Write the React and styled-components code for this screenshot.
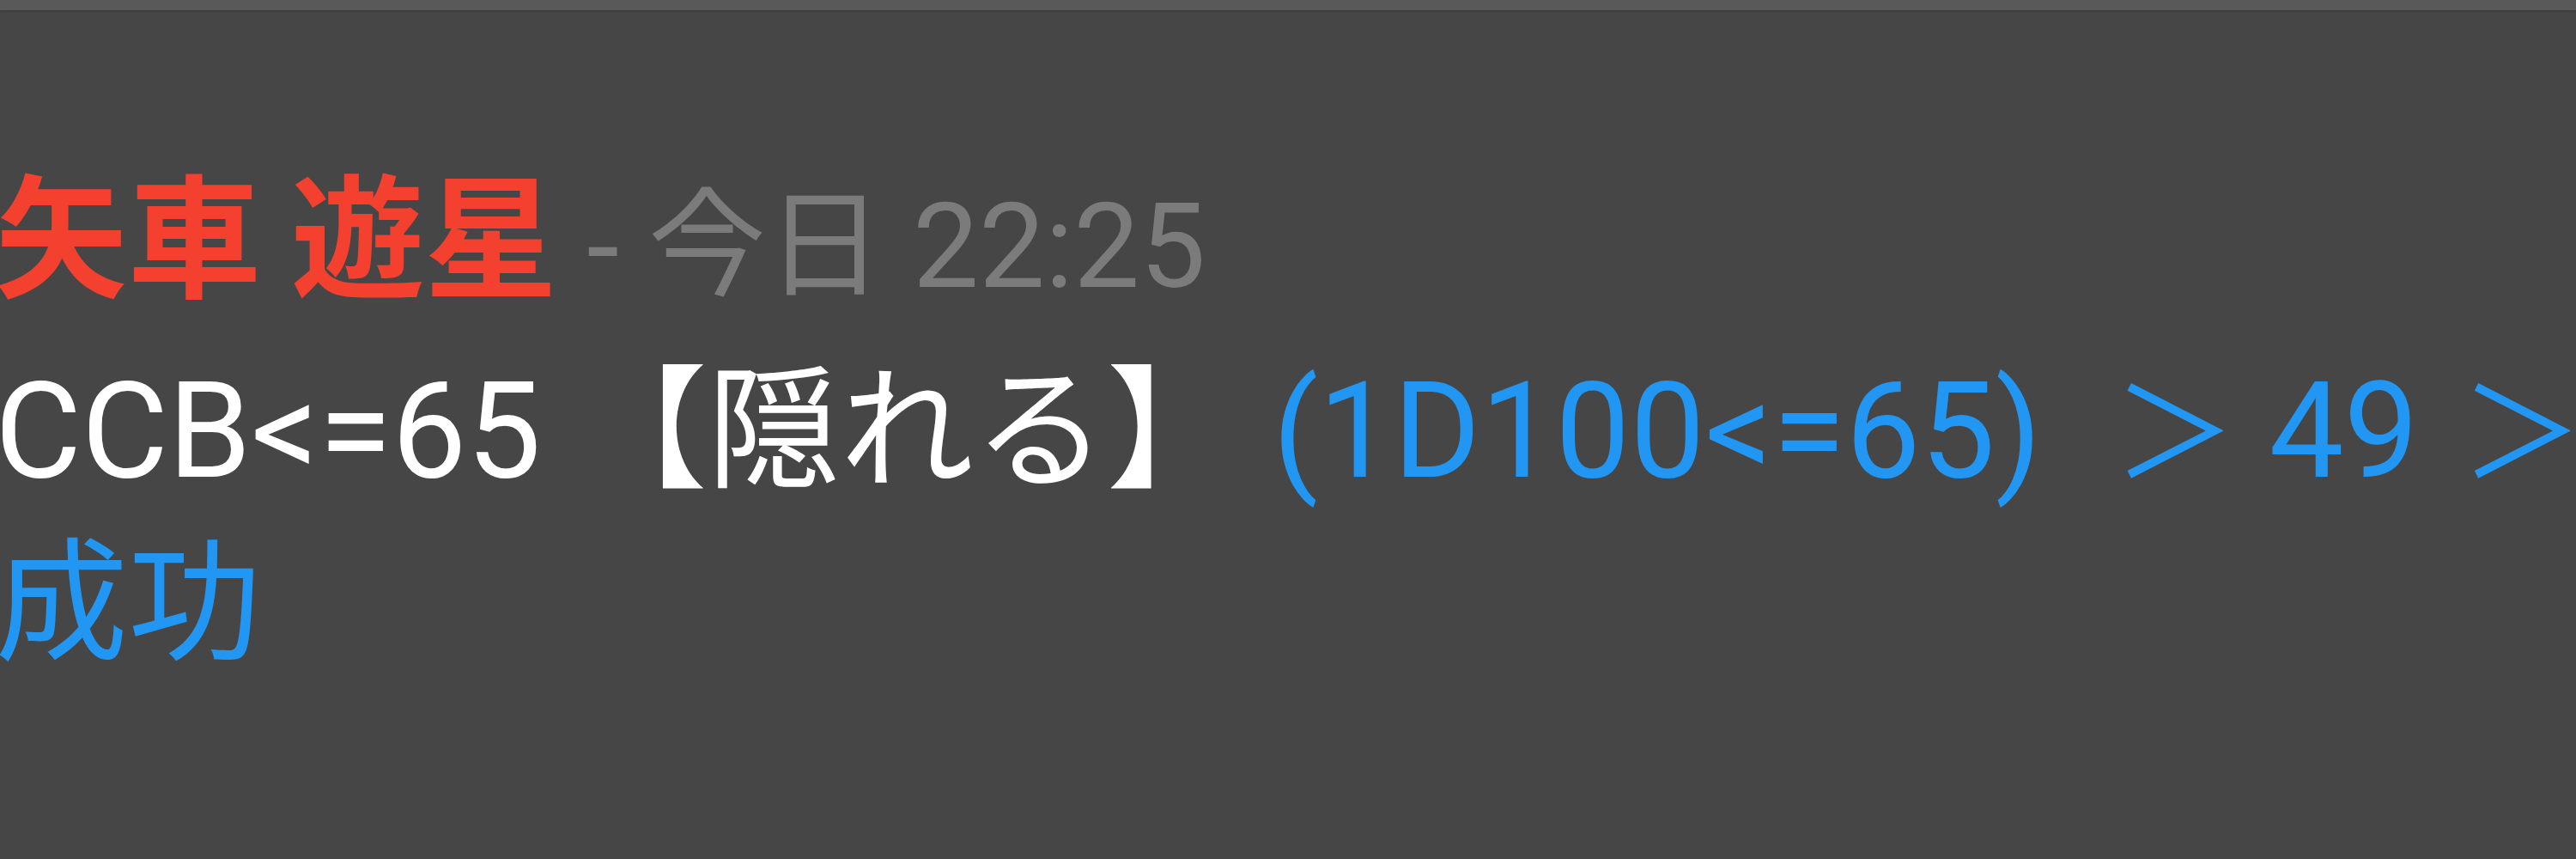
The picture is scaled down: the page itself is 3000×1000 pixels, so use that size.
import styled, { createGlobalStyle } from 'styled-components';

const GlobalStyle = createGlobalStyle`
  html, body {
    margin: 0;
    padding: 0;
    background: #464646;
  }
  body {
    font-family: Roboto, "Noto Sans CJK JP", sans-serif;
    overflow: hidden;
  }
`;

// tela inteira do chat
const Screen = styled.div`
  width: 3000px;
  height: 1000px;
  background: #464646;
  overflow: hidden;
  display: flex;
  flex-direction: column;
`;

// faixa clara no topo
const TopBar = styled.div`
  height: 12px;
  flex-shrink: 0;
  background: #595959;
  box-shadow: 0 1px 2px rgba(0, 0, 0, 0.25);
`;

const Message = styled.div`
  padding-top: 187px;
  margin-left: -6px;
  width: 3060px;
`;

const Header = styled.div`
  line-height: 136px;
  margin-bottom: 7px;
  white-space: nowrap;
`;

const Name = styled.span`
  font-family: "Noto Sans CJK JP", sans-serif;
  font-weight: 700;
  font-size: 155px;
  color: #f4402f;
`;

const Meta = styled.span`
  font-size: 137px;
  color: #7b7b7b;
`;

const Body = styled.div`
  font-size: 155px;
  line-height: 197px;
  color: #ffffff;
`;

const Result = styled.span`
  color: #2196f3;
`;

// sinal ＞ de largura total
const Arrow = styled.span`
  font-size: 143px;
  margin-left: ${(p) => p.$shift}px;
`;

const App = () => {
  return (
    <Screen>
      <GlobalStyle />
      <TopBar />
      <Message>
        <Header>
          <Name>矢車 遊星</Name>
          <Meta> - 今日 22:25</Meta>
        </Header>
        <Body>
          CCB&lt;=65 【隠れる】{' '}
          <Result>
            (1D100&lt;=65) <Arrow $shift={45}>＞</Arrow> 49 <Arrow $shift={10}>＞</Arrow> 成功
          </Result>
        </Body>
      </Message>
    </Screen>
  );
};

export default App;
